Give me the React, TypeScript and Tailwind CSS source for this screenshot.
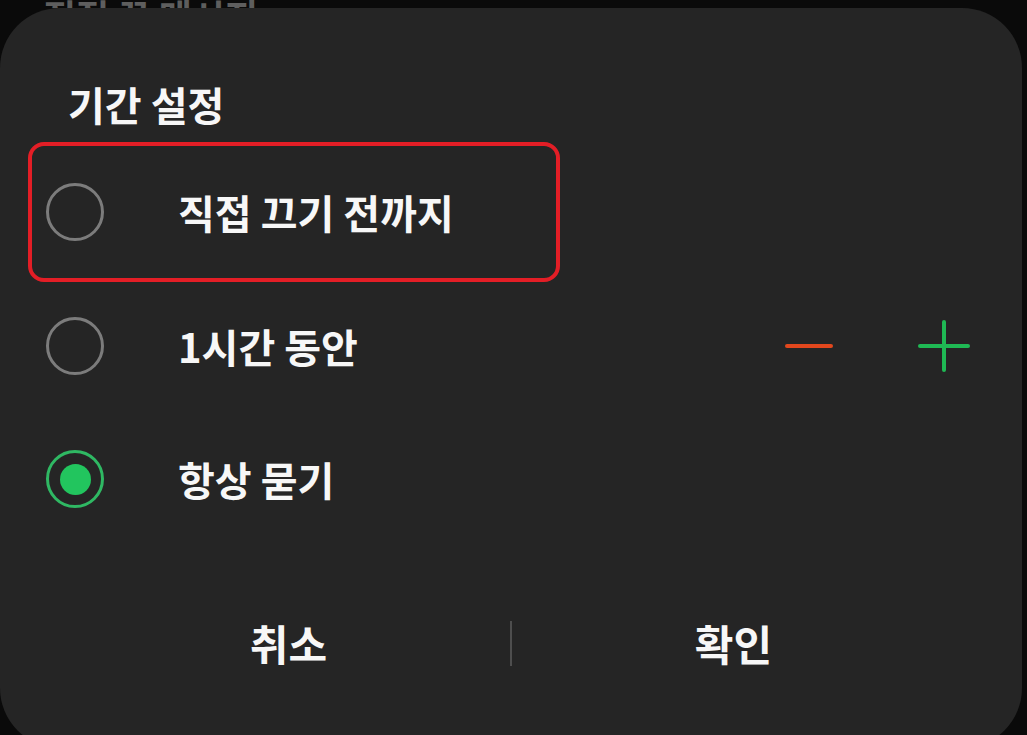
import React from 'react';

const font = { fontFamily: '"Noto Sans CJK KR", "Noto Sans", sans-serif' };

const Radio: React.FC<{ checked?: boolean }> = ({ checked }) =>
  checked ? (
    <div className="w-[58px] h-[58px] rounded-full border-[3px] border-[#2fb863] flex items-center justify-center shrink-0">
      <div className="w-[31px] h-[31px] rounded-full bg-[#22c55e]" />
    </div>
  ) : (
    <div className="w-[58px] h-[58px] rounded-full border-[3px] border-[#7c7c7c] shrink-0" />
  );

export default function App() {
  return (
    <div className="w-[1027px] h-[735px] bg-[#0a0a0a] overflow-hidden flex flex-col" style={font}>
      {/* app text behind the dialog, clipped */}
      <div className="h-[8px] shrink-0 overflow-hidden pl-[43px]">
        <p className="text-[36px] leading-none font-bold text-[#5e5e5e] -mt-[3px] whitespace-nowrap">직접 끈 메시지</p>
      </div>

      <div className="w-[1022px] h-[740px] bg-[#252525] rounded-[60px] flex flex-col shrink-0">
        <div className="pl-[68px] pt-[76px] mb-[18px]">
          <h1 className="text-[40px] leading-none font-bold text-[#f7f7f7] h-[40px]">기간 설정</h1>
        </div>

        <div className="ml-[28px] w-[532px] h-[140px] border-[4px] border-[#e31e26] rounded-[16px] flex items-center pl-[14px]">
          <Radio />
          <span className="ml-[74px] text-[40px] leading-none font-bold text-[#f7f7f7]">직접 끄기 전까지</span>
        </div>

        <div className="h-[128px] flex items-center pl-[46px] pr-[52px]">
          <Radio />
          <span className="ml-[74px] text-[40px] leading-none font-bold text-[#f7f7f7]">1시간 동안</span>
          <div className="ml-auto flex items-center gap-[85px]">
            <svg width="48" height="52" viewBox="0 0 48 52">
              <line x1="2" y1="26" x2="46" y2="26" stroke="#e2471d" strokeWidth="4" strokeLinecap="round" />
            </svg>
            <svg width="52" height="52" viewBox="0 0 52 52">
              <line x1="2" y1="26" x2="50" y2="26" stroke="#1fb954" strokeWidth="4" strokeLinecap="round" />
              <line x1="26" y1="2" x2="26" y2="50" stroke="#1fb954" strokeWidth="4" strokeLinecap="round" />
            </svg>
          </div>
        </div>

        <div className="h-[138px] flex items-center pl-[46px]">
          <Radio checked />
          <span className="ml-[74px] text-[40px] leading-none font-bold text-[#f7f7f7]">항상 묻기</span>
        </div>

        <div className="h-[190px] flex items-center px-[67px]">
          <button className="flex-1 text-[42px] leading-none font-bold text-[#f7f7f7] text-center">취소</button>
          <div className="w-[2px] h-[45px] bg-[#4e4e4e]" />
          <button className="flex-1 text-[42px] leading-none font-bold text-[#f7f7f7] text-center">확인</button>
        </div>
      </div>
    </div>
  );
}
